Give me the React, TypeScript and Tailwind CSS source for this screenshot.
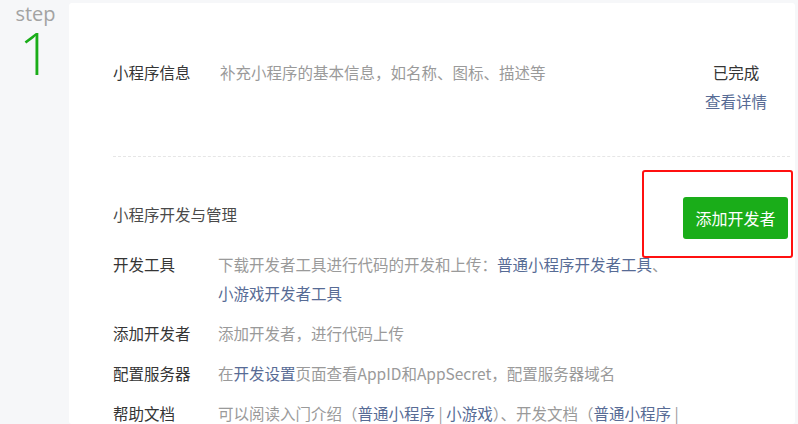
import React from "react";

const cjk = { fontFamily: '"Noto Sans CJK SC", "Noto Sans", sans-serif' };

function Row({ label, children }: { label: string; children: React.ReactNode }) {
  return (
    <div className="flex items-start leading-[29px]">
      <div className="w-[105px] flex-none text-[#353535]">{label}</div>
      <div className="flex-none text-[#9a9a9a] whitespace-nowrap">{children}</div>
    </div>
  );
}

const A = ({ children }: { children: React.ReactNode }) => (
  <span className="text-[#576b95]">{children}</span>
);

export default function App() {
  return (
    <div className="w-[798px] h-[424px] bg-[#f6f7f9] flex overflow-hidden" style={cjk}>
      <div className="w-[69px] flex-none flex flex-col items-center pl-[2px]">
        <div
          className="text-[20px] leading-[18px] text-[#a3a3a3] mt-[5px]"
          style={{ fontFamily: '"Open Sans", "Noto Sans", sans-serif' }}
        >
          step
        </div>
        <div
          className="text-[58px] leading-none text-[#1aad19] mt-[1px] font-light"
          style={{ fontFamily: '"Open Sans", "Noto Sans", sans-serif' }}
        >
          1
        </div>
      </div>
      <div className="flex-1 mt-[3px] mr-[3px] bg-white rounded-[3px] pl-[44px] pr-[5px] text-[15.5px] relative">
        <div className="flex items-start pt-[55px] pb-[40px] leading-[29px]">
          <div className="w-[107px] flex-none text-[#353535]">小程序信息</div>
          <div className="flex-1 text-[#9a9a9a]">补充小程序的基本信息，如名称、图标、描述等</div>
          <div className="flex-none flex flex-col items-center mr-[23px]">
            <div className="text-[#353535]">已完成</div>
            <div className="text-[#576b95]">查看详情</div>
          </div>
        </div>
        <div className="border-t border-dashed border-[#e6e6e6]" />
        <div className="pt-[40px] flex flex-col gap-[11px]">
          <div className="flex items-start justify-between">
            <div className="text-[#4a4a4a] leading-[29px] pt-[3px]">小程序开发与管理</div>
            <button className="w-[105px] h-[42px] rounded-[3px] bg-[#1aad19] text-white text-[16px] mr-[2px]">
              添加开发者
            </button>
          </div>
          <Row label="开发工具">
            下载开发者工具进行代码的开发和上传：<A>普通小程序开发者工具</A>、
            <br />
            <A>小游戏开发者工具</A>
          </Row>
          <Row label="添加开发者">添加开发者，进行代码上传</Row>
          <Row label="配置服务器">
            在<A>开发设置</A>页面查看AppID和AppSecret，配置服务器域名
          </Row>
          <Row label="帮助文档">
            可以阅读入门介绍（<A>普通小程序</A> | <A>小游戏</A>）、开发文档（<A>普通小程序</A> |
          </Row>
        </div>
        <div className="absolute left-[573px] top-[167px] w-[151px] h-[88px] border-2 border-[#ff1010] rounded-[3px]" />
      </div>
    </div>
  );
}
